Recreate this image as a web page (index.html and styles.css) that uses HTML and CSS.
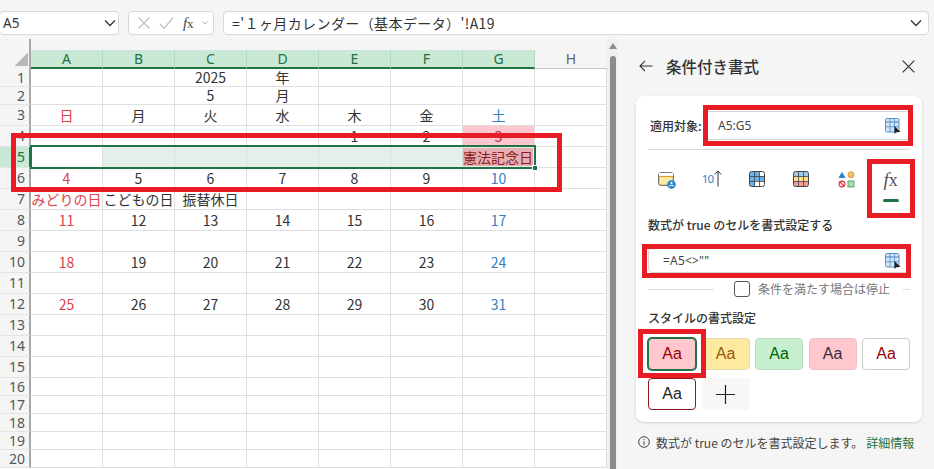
FILE: index.html
```html
<!DOCTYPE html>
<html lang="ja">
<head>
<meta charset="utf-8">
<title>条件付き書式</title>
<link rel="stylesheet" href="styles.css">
</head>
<body>
<div class="app">
  <header class="fbar">
    <div class="box namebox"><span>A5</span>
      <svg class="chev" width="12" height="8" viewBox="0 0 12 8"><path d="M1 1.5 6 6.5 11 1.5" fill="none" stroke="#333" stroke-width="1.3"/></svg>
    </div>
    <div class="box fxbox">
      <svg width="14" height="14" viewBox="0 0 14 14"><path d="M1.5 1.5 12.5 12.5M12.5 1.5 1.5 12.5" stroke="#c4c4c4" stroke-width="1.4" fill="none"/></svg>
      <svg width="15" height="14" viewBox="0 0 15 14"><path d="M1 8 5 12.5 14 1.5" stroke="#c4c4c4" stroke-width="1.4" fill="none"/></svg>
      <span class="fx">f<small>x</small></span>
      <svg width="6" height="4" viewBox="0 0 6 4"><path d="M.5.5 3 3 5.5.5" stroke="#aaa" fill="none"/></svg>
    </div>
    <div class="box formula"><span class="ftext">='１ヶ月カレンダー（基本データ）'!A19</span>
      <svg class="chev" width="12" height="8" viewBox="0 0 12 8"><path d="M1 1.5 6 6.5 11 1.5" fill="none" stroke="#333" stroke-width="1.3"/></svg>
    </div>
  </header>

  <div class="main">
    <section class="sheet">
      <div class="row head">
        <span class="rh corner"></span>
        <span class="ch on">A</span><span class="ch on">B</span><span class="ch on">C</span><span class="ch on">D</span><span class="ch on">E</span><span class="ch on">F</span><span class="ch on">G</span><span class="ch">H</span>
      </div>
      <div class="row low"><span class="rh">1</span><span class="c"></span><span class="c"></span><span class="c">2025</span><span class="c">年</span><span class="c"></span><span class="c"></span><span class="c"></span><span class="c"></span></div>
      <div class="row low"><span class="rh">2</span><span class="c"></span><span class="c"></span><span class="c">5</span><span class="c">月</span><span class="c"></span><span class="c"></span><span class="c"></span><span class="c"></span></div>
      <div class="row"><span class="rh">3</span><span class="c sun">日</span><span class="c">月</span><span class="c">火</span><span class="c">水</span><span class="c">木</span><span class="c">金</span><span class="c sat">土</span><span class="c"></span></div>
      <div class="row"><span class="rh">4</span><span class="c"></span><span class="c"></span><span class="c"></span><span class="c"></span><span class="c">1</span><span class="c">2</span><span class="c hit">3</span><span class="c"></span></div>
      <div class="row"><span class="rh rh-on">5</span><span class="c"></span><span class="c sel"></span><span class="c sel"></span><span class="c sel"></span><span class="c sel"></span><span class="c sel"></span><span class="c sel"><span class="hitsel">憲法記念日</span></span><span class="c"></span></div>
      <div class="row"><span class="rh">6</span><span class="c sun">4</span><span class="c">5</span><span class="c">6</span><span class="c">7</span><span class="c">8</span><span class="c">9</span><span class="c sat">10</span><span class="c"></span></div>
      <div class="row"><span class="rh">7</span><span class="c sun">みどりの日</span><span class="c">こどもの日</span><span class="c">振替休日</span><span class="c"></span><span class="c"></span><span class="c"></span><span class="c"></span><span class="c"></span></div>
      <div class="row"><span class="rh">8</span><span class="c sun">11</span><span class="c">12</span><span class="c">13</span><span class="c">14</span><span class="c">15</span><span class="c">16</span><span class="c sat">17</span><span class="c"></span></div>
      <div class="row"><span class="rh">9</span><span class="c"></span><span class="c"></span><span class="c"></span><span class="c"></span><span class="c"></span><span class="c"></span><span class="c"></span><span class="c"></span></div>
      <div class="row"><span class="rh">10</span><span class="c sun">18</span><span class="c">19</span><span class="c">20</span><span class="c">21</span><span class="c">22</span><span class="c">23</span><span class="c sat">24</span><span class="c"></span></div>
      <div class="row"><span class="rh">11</span><span class="c"></span><span class="c"></span><span class="c"></span><span class="c"></span><span class="c"></span><span class="c"></span><span class="c"></span><span class="c"></span></div>
      <div class="row"><span class="rh">12</span><span class="c sun">25</span><span class="c">26</span><span class="c">27</span><span class="c">28</span><span class="c">29</span><span class="c">30</span><span class="c sat">31</span><span class="c"></span></div>
      <div class="row"><span class="rh">13</span><span class="c"></span><span class="c"></span><span class="c"></span><span class="c"></span><span class="c"></span><span class="c"></span><span class="c"></span><span class="c"></span></div>
      <div class="row"><span class="rh">14</span><span class="c"></span><span class="c"></span><span class="c"></span><span class="c"></span><span class="c"></span><span class="c"></span><span class="c"></span><span class="c"></span></div>
      <div class="row"><span class="rh">15</span><span class="c"></span><span class="c"></span><span class="c"></span><span class="c"></span><span class="c"></span><span class="c"></span><span class="c"></span><span class="c"></span></div>
      <div class="row low"><span class="rh">16</span><span class="c"></span><span class="c"></span><span class="c"></span><span class="c"></span><span class="c"></span><span class="c"></span><span class="c"></span><span class="c"></span></div>
      <div class="row low"><span class="rh">17</span><span class="c"></span><span class="c"></span><span class="c"></span><span class="c"></span><span class="c"></span><span class="c"></span><span class="c"></span><span class="c"></span></div>
      <div class="row low"><span class="rh">18</span><span class="c"></span><span class="c"></span><span class="c"></span><span class="c"></span><span class="c"></span><span class="c"></span><span class="c"></span><span class="c"></span></div>
      <div class="row low"><span class="rh">19</span><span class="c"></span><span class="c"></span><span class="c"></span><span class="c"></span><span class="c"></span><span class="c"></span><span class="c"></span><span class="c"></span></div>
      <div class="row low"><span class="rh">20</span><span class="c"></span><span class="c"></span><span class="c"></span><span class="c"></span><span class="c"></span><span class="c"></span><span class="c"></span><span class="c"></span></div>
    </section>

    <div class="vscroll"><span class="arrow"></span><span class="thumb"></span></div>

    <aside class="panel">
      <div class="phead">
        <svg width="14" height="12" viewBox="0 0 14 12"><path d="M6 .8 1 6 6 11.2M1 6H13.5" fill="none" stroke="#333" stroke-width="1.1"/></svg>
        <h1>条件付き書式</h1>
        <svg class="close" width="13" height="13" viewBox="0 0 13 13"><path d="M.7.7 12.3 12.3M12.3.7 .7 12.3" stroke="#333" stroke-width="1.2" fill="none"/></svg>
      </div>

      <div class="card">
        <div class="rangerow">
          <label>適用対象:</label>
          <div class="field"><span>A5:G5</span>
            <svg width="16" height="16" viewBox="0 0 16 16"><use href="#rng"/></svg>
          </div>
        </div>
        <div class="rule"></div>

        <div class="types">
          <div class="type">
            <svg width="18" height="18" viewBox="0 0 18 18"><rect x=".7" y="1.7" width="14.6" height="12.6" rx="2" fill="#fde9a8" stroke="#555"/><rect x="1" y="2" width="14" height="3" fill="#fff"/><path d="M1 5.5H15" stroke="#e0a030" stroke-width="1.2"/><circle cx="13.5" cy="13.5" r="4.3" fill="#2b88c8"/><path d="M11 15.5c.6-1.6 4.4-1.6 5 0" stroke="#fff" fill="none"/><circle cx="13.5" cy="12" r="1.1" fill="#fff"/></svg>
          </div>
          <div class="type"><span class="ten">10</span><svg width="8" height="17" viewBox="0 0 8 17"><path d="M4 16.500V1M.8 4.500 4 1 7.200 4.500" fill="none" stroke="#333" stroke-width="1"/></svg></div>
          <div class="type">
            <svg width="16" height="16" viewBox="0 0 16 16"><rect x=".5" y=".5" width="15" height="15" rx="2" fill="#fff"/><path d="M1 1H10V5H15V10H6V15H1Z" fill="#6cb0e8"/><rect x=".5" y=".5" width="15" height="15" rx="2" fill="none" stroke="#444"/><path d="M5.500 1V15M10.500 1V15M1 5.500H15M1 10.500H15" stroke="#444" stroke-width=".8"/></svg>
          </div>
          <div class="type">
            <svg width="16" height="16" viewBox="0 0 16 16"><rect x="1" y="1" width="14" height="5" fill="#9ccaf0"/><rect x="1" y="5.500" width="14" height="5" fill="#fde08a"/><rect x="1" y="10.500" width="14" height="5" fill="#f59a94"/><rect x=".5" y=".5" width="15" height="15" rx="2" fill="none" stroke="#444"/><path d="M5.500 1V15M10.500 1V15M1 5.500H15M1 10.500H15" stroke="#444" stroke-width=".8"/></svg>
          </div>
          <div class="type">
            <svg width="17" height="17" viewBox="0 0 17 17"><path d="M4 .8 7.600 7H.4Z" fill="#2b88c8"/><circle cx="13" cy="3.800" r="3" fill="#f3c06a" stroke="#d08a20" stroke-width=".8"/><circle cx="4" cy="13" r="2.900" fill="#fff" stroke="#d9363e" stroke-width="1.100"/><path d="M2 11 6 15" stroke="#d9363e" stroke-width="1.100"/><rect x="10" y="10" width="6" height="6" fill="#a6dcb4" stroke="#3f9a5e" stroke-width=".8"/></svg>
          </div>
          <div class="type on"><span class="fxbig">f<small>x</small></span><span class="bar"></span></div>
        </div>

        <h2>数式が true のセルを書式設定する</h2>
        <div class="field field2"><span>=A5&lt;&gt;""</span>
          <svg width="16" height="16" viewBox="0 0 16 16"><use href="#rng"/></svg>
        </div>

        <div class="stop">
          <span class="line l1"></span>
          <span class="check"></span>
          <span class="stoptext">条件を満たす場合は停止</span>
          <span class="line l2"></span>
        </div>

        <h2 class="h-style">スタイルの書式設定</h2>
        <div class="styles">
          <button class="sw s1">Aa</button>
          <button class="sw s2">Aa</button>
          <button class="sw s3">Aa</button>
          <button class="sw s4">Aa</button>
          <button class="sw s5">Aa</button>
          <button class="sw s6">Aa</button>
          <button class="sw s7"><svg width="19" height="19" viewBox="0 0 19 19"><path d="M9.500 0V19M0 9.500H19" stroke="#222" stroke-width="1.200"/></svg></button>
        </div>
      </div>

      <div class="foot">
        <svg width="12" height="12" viewBox="0 0 12 12"><circle cx="6" cy="6" r="5.300" fill="none" stroke="#444"/><path d="M6 5.200V9M6 3V4.100" stroke="#444"/></svg>
        <span>数式が true のセルを書式設定します。</span>
        <span class="link">詳細情報</span>
      </div>
    </aside>
  </div>

  <div class="selbox"><span class="handle"></span></div>
  <div class="mark m-sheet"></div>
  <div class="mark m-range"></div>
  <div class="mark m-fx"></div>
  <div class="mark m-formula"></div>
  <div class="mark m-style"></div>

  <svg class="defs" width="0" height="0" aria-hidden="true"><defs>
    <g id="rng"><rect x=".5" y=".5" width="13.500" height="13.500" rx="1.500" fill="#d3e6f7" stroke="#5b93c8"/><path d="M.5 4H14" stroke="#5b93c8" stroke-width="1.200"/><path d="M5 .5V14M9.500 .5V14M.5 8.700H14" stroke="#5b93c8" stroke-width=".9"/><path d="M9.500 8 9.500 16 11.500 14 15.500 14Z" fill="#222"/></g>
  </defs></svg>
</div>
</body>
</html>
```
FILE: styles.css
```css
* { box-sizing: border-box; }
html, body { margin: 0; padding: 0; }
body {
  width: 934px; height: 469px; overflow: hidden;
  background: #f5f5f5; color: #222;
  font-family: "Noto Sans CJK JP", "Noto Sans", sans-serif;
}
.app { position: relative; width: 934px; height: 469px; overflow: hidden; }
.defs { position: absolute; }

/* formula bar */
.fbar { height: 39px; padding: 11px 5px 4px 0; display: flex; gap: 9px; }
.box {
  height: 24px; background: #fff; border: 1px solid #d8d8d8; border-radius: 4px;
  display: flex; align-items: center;
}
.namebox {
  width: 120px; margin-left: -1px; padding: 0 1px 0 3px; justify-content: space-between;
  font: 13.5px "Noto Sans", sans-serif; color: #333;
}
.namebox .chev { margin-right: 1px; }
.fxbox { width: 86px; padding: 0 5px 0 8px; justify-content: space-between; }
.fx { font: italic 15px "Liberation Serif", serif; color: #444; }
.fx small { font-size: 13px; font-style: normal; }
.formula { flex: 1; padding: 0 6px 0 8px; justify-content: space-between; font-size: 14px; color: #333; }
.ftext { letter-spacing: .4px; line-height: 20px; }

.main { display: flex; height: 430px; }

/* sheet */
.sheet { width: 607px; padding-top: 11px; background: linear-gradient(#f5f5f5 11px, #fff 11px); flex: none; overflow: hidden; }
.row { display: grid; grid-template-columns: 31px repeat(8, 72px); grid-template-rows: minmax(0, 1fr); height: 21px; }
.row.low { height: 18px; }
.row.head { height: 19px; }
.rh {
  display: block; background: #f5f5f5; border-right: 2px solid #a8a8a8; border-bottom: 1px solid #e4e4e4;
  padding-right: 4px; text-align: right; color: #555;
  font: 14px/20px "Noto Sans", sans-serif;
}
.low .rh { line-height: 17px; }
.rh-on { background: #c9e8d6; color: #217346; border-right-color: #217346; }
.corner {
  margin-top: -11px; height: 30px; border-bottom: 0; padding: 0;
  background-color: #f5f5f5;
  background-image: linear-gradient(to bottom right, rgba(180,180,180,0) 50%, #b8b8b8 50%);
  background-repeat: no-repeat; background-size: 13px 13px; background-position: 15px 14px;
}
.ch {
  display: block; text-align: center; color: #666; background: #f5f5f5;
  font: 14px/18px "Noto Sans", sans-serif; border-bottom: 1px solid #c8c8c8;
}
.ch.on { background: #c9e8d6; color: #217346; border-right: 1px solid #b2d9c2; border-bottom: 2px solid #217346; line-height: 17px; }
.c {
  display: block; position: relative; background: #fff; text-align: center; white-space: nowrap;
  border-right: 1px solid #dedede; border-bottom: 1px solid #dedede;
  font-size: 14px; line-height: 20px; color: #333;
}
.low .c { line-height: 17px; }
.sun { color: #dc434a; }
.sat { color: #3580bf; }
.sel { background: #e3efe8; }
.hit { background: #ffc7ce; color: #b3303a; }
.hitsel {
  position: absolute; left: 0; top: 1px; right: 1px; bottom: 1px;
  background: #e6b0b3; color: #8f1a22; line-height: 18px; letter-spacing: 0;
}

/* scroll */
.vscroll { width: 11px; flex: none; background: #f0f0f0; display: flex; flex-direction: column; align-items: center; padding-top: 4px; }
.arrow { border: 4px solid transparent; border-top: 0; border-bottom: 6px solid #8a8a8a; margin-left: 1px; }
.thumb { flex: 1; width: 6px; background: #8c8c8c; margin: 7px 0 0 1px; border-radius: 3px 3px 0 0; }

/* panel */
.panel { flex: 1; padding: 0 12px 0 18px; background: #f5f5f5; }
.phead { height: 57px; display: flex; align-items: center; padding: 0 7px 3px 3px; }
.phead h1 { margin: 0 0 0 13px; flex: 1; font-size: 15.5px; font-weight: 500; line-height: 22px; color: #333; }
.card {
  background: #fff; border-radius: 8px; height: 326px; padding: 15px 12px 0;
  box-shadow: 0 1px 3px rgba(0,0,0,.14);
}
.rangerow { display: flex; align-items: center; gap: 3px; }
.rangerow label { margin-left: 2px; width: 51px; font-size: 12px; font-weight: 500; white-space: nowrap; color: #333; }
.field {
  flex: 1; height: 29px; display: flex; align-items: center; justify-content: space-between;
  padding: 0 8px 0 13px; border: 1px solid #d4d4d4; border-radius: 4px;
  font: 12px "Noto Sans", sans-serif; color: #444;
}
.field svg { overflow: visible; }
.rule { height: 1px; background: #dcdcdc; margin-top: 9px; }
.types { display: flex; margin: 10px -3px 0; height: 44px; }
.type { flex: 1; display: flex; flex-direction: column; align-items: center; padding-top: 11px; }
.type:nth-child(2) { flex-direction: row; justify-content: center; align-items: flex-start; padding-top: 10px; gap: 0; }
.ten { font: 11.500px/18px "Noto Sans", sans-serif; color: #2b88c8; letter-spacing: -.8px; margin-right: 1px; }
.fxbig { font: italic 19px/18px "Liberation Serif", serif; color: #555; height: 28px; }
.fxbig small { font-size: 18px; font-style: normal; }
.bar { width: 16px; height: 3px; background: #217346; border-radius: 2px; }
h2 { margin: 13px 0 0; font-size: 12px; font-weight: 500; line-height: 16px; color: #333; }
.field2 { margin-top: 15px; height: 25px; flex: none; padding: 0 8px 0 14px; font-size: 12px; letter-spacing: .2px; }
.stop { display: flex; align-items: center; height: 16px; margin-top: 8px; }
.line { height: 1px; background: #dcdcdc; }
.l1 { width: 66px; margin-right: 20px; }
.l2 { flex: 1; margin-left: 13px; }
.check { width: 16px; height: 16px; border: 1px solid #555; border-radius: 3px; margin-right: 8px; }
.stoptext { font-size: 12px; color: #777; line-height: 16px; }
.h-style { margin-top: 13px; }
.styles { display: grid; grid-template-columns: repeat(5, 48px); column-gap: 5.5px; row-gap: 8px; margin-top: 12px; }
.sw {
  height: 32px; padding: 0; border: 1px solid #ccc; border-radius: 4px; background: #fff;
  font: 16px "Liberation Sans", sans-serif; display: flex; align-items: center; justify-content: center;
}
.s1 { background: #ffc7ce; color: #9c0006; border-color: #217346; box-shadow: 0 0 0 1px #217346; }
.s2 { background: #fde9a0; color: #9c5700; border-color: #e5d9a8; }
.s3 { background: #c6efce; color: #006100; border-color: #bcdcc2; }
.s4 { background: #ffc7ce; color: #3e2a3a; border-color: #eec0c6; }
.s5 { color: #9c0006; }
.s6 { color: #222; border-color: #8b1a1a; }
.s7 { background: #f8f7f6; border-color: #f8f7f6; }
.foot { display: flex; align-items: center; margin: 13px 0 0 2px; height: 14px; font-size: 12px; color: #444; white-space: nowrap; }
.foot svg { margin-right: 6px; flex: none; }
.link { margin-left: 3px; color: #217346; }

/* overlays */
.selbox { position: absolute; left: 30px; top: 145px; width: 506px; height: 24px; border: 2px solid #217346; }
.handle { position: absolute; right: -4px; bottom: -4px; width: 6px; height: 6px; background: #217346; border: 1px solid #fff; }
.mark { position: absolute; border: 5px solid #e81c24; }
.m-sheet { left: 11px; top: 133px; width: 551px; height: 59px; }
.m-range { left: 703px; top: 105px; width: 210px; height: 41px; }
.m-fx { left: 867px; top: 159px; width: 48px; height: 59px; }
.m-formula { left: 642px; top: 244px; width: 269px; height: 34px; }
.m-style { left: 638px; top: 329px; width: 68px; height: 49px; }
```
